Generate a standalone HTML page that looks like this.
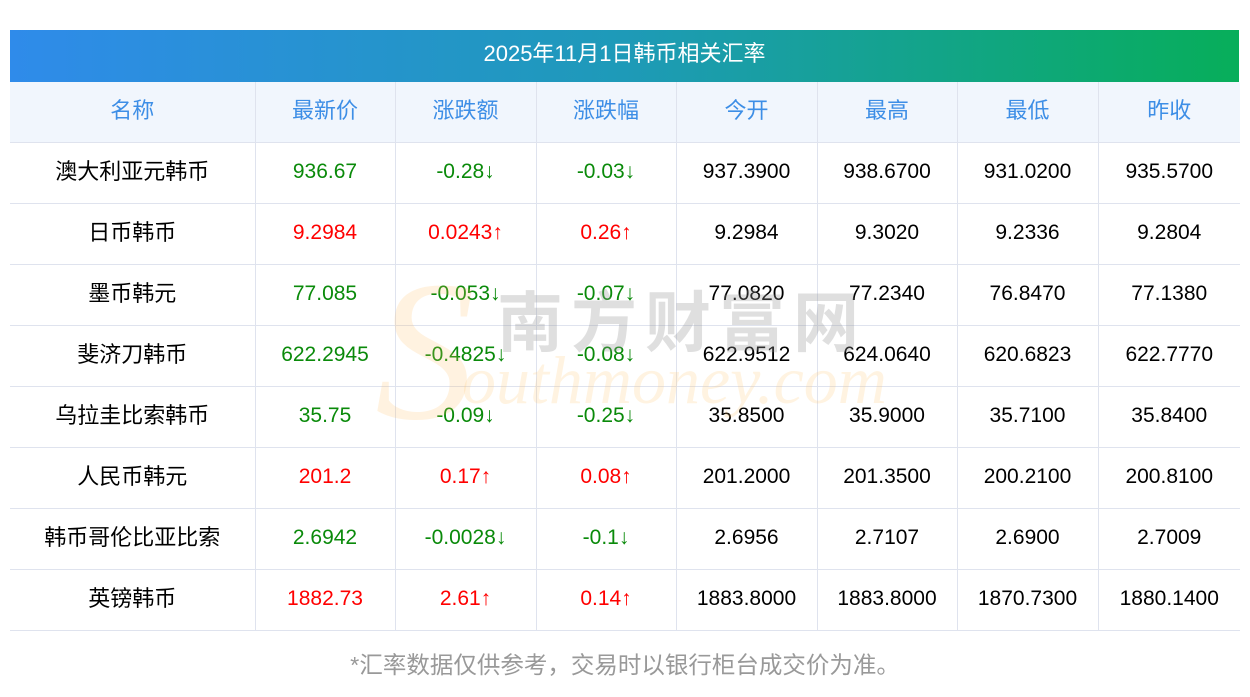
<!DOCTYPE html>
<html><head><meta charset="utf-8"><style>
body{margin:0;background:#fff;width:1250px;height:697px;position:relative;overflow:hidden;font-family:"Liberation Sans","Noto Sans CJK SC",sans-serif}
.bar{position:absolute;left:10px;top:30px;width:1229px;height:52px;background:linear-gradient(90deg,#2f8bea,#1e9ab8 50%,#07ae5a);color:#fff;font-size:22px;text-align:center;line-height:48px}
table{position:absolute;left:10px;top:82px;width:1230px;border-collapse:collapse;table-layout:fixed}
td,th{border:1px solid #dfe3ee;height:58px;text-align:center;font-size:21px;line-height:24px;font-weight:normal;padding:0 0 2px 0;color:#000}
td:first-child{font-size:22px}
th{background:#f1f6fd;color:#3d8ee6;font-size:22px}
tr td:first-child,tr th:first-child{border-left:none}
tr td:last-child,tr th:last-child{border-right:none}
tr:first-child th{border-top:none}
.g{color:#0a8a0a}.r{color:#f00}
.foot{position:absolute;top:650px;left:0;width:1250px;text-align:center;color:#999;font-size:23.5px;line-height:30px}
.wm1{position:absolute;left:497px;top:288px;font-size:66px;color:rgba(150,150,150,.3);letter-spacing:8px;font-weight:bold;z-index:2;line-height:70px}
.wm2{position:absolute;left:462px;top:340px;font-size:68px;font-style:italic;font-family:"Liberation Serif",serif;color:rgba(253,200,120,.22);z-index:2;line-height:80px}
.wm3{position:absolute;left:375px;top:252px;font-size:200px;font-style:italic;font-family:"Liberation Serif",serif;color:rgba(253,190,100,.2);z-index:2;line-height:1}
</style></head><body>
<div class="bar">2025年11月1日韩币相关汇率</div>
<table>
<colgroup><col style="width:245px"><col style="width:140px"><col style="width:141px"><col style="width:140px"><col style="width:141px"><col style="width:140px"><col style="width:141px"><col style="width:142px"></colgroup>
<tr><th>名称</th><th>最新价</th><th>涨跌额</th><th>涨跌幅</th><th>今开</th><th>最高</th><th>最低</th><th>昨收</th></tr>
<tr><td>澳大利亚元韩币</td><td class="g">936.67</td><td class="g">-0.28↓</td><td class="g">-0.03↓</td><td>937.3900</td><td>938.6700</td><td>931.0200</td><td>935.5700</td></tr>
<tr><td>日币韩币</td><td class="r">9.2984</td><td class="r">0.0243↑</td><td class="r">0.26↑</td><td>9.2984</td><td>9.3020</td><td>9.2336</td><td>9.2804</td></tr>
<tr><td>墨币韩元</td><td class="g">77.085</td><td class="g">-0.053↓</td><td class="g">-0.07↓</td><td>77.0820</td><td>77.2340</td><td>76.8470</td><td>77.1380</td></tr>
<tr><td>斐济刀韩币</td><td class="g">622.2945</td><td class="g">-0.4825↓</td><td class="g">-0.08↓</td><td>622.9512</td><td>624.0640</td><td>620.6823</td><td>622.7770</td></tr>
<tr><td>乌拉圭比索韩币</td><td class="g">35.75</td><td class="g">-0.09↓</td><td class="g">-0.25↓</td><td>35.8500</td><td>35.9000</td><td>35.7100</td><td>35.8400</td></tr>
<tr><td>人民币韩元</td><td class="r">201.2</td><td class="r">0.17↑</td><td class="r">0.08↑</td><td>201.2000</td><td>201.3500</td><td>200.2100</td><td>200.8100</td></tr>
<tr><td>韩币哥伦比亚比索</td><td class="g">2.6942</td><td class="g">-0.0028↓</td><td class="g">-0.1↓</td><td>2.6956</td><td>2.7107</td><td>2.6900</td><td>2.7009</td></tr>
<tr><td>英镑韩币</td><td class="r">1882.73</td><td class="r">2.61↑</td><td class="r">0.14↑</td><td>1883.8000</td><td>1883.8000</td><td>1870.7300</td><td>1880.1400</td></tr>
</table>
<div class="wm3">S</div>
<div class="wm1">南方财富网</div>
<div class="wm2">outhmoney.com</div>
<div class="foot">*汇率数据仅供参考，交易时以银行柜台成交价为准。</div>
</body></html>
